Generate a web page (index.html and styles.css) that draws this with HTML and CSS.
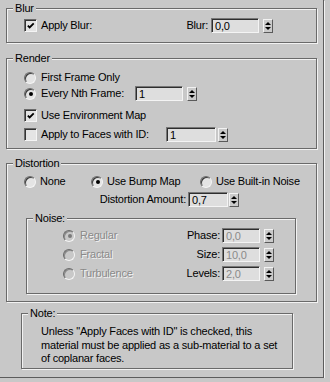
FILE: index.html
```html
<!DOCTYPE html>
<html lang="en">
<head>
    <meta charset="UTF-8">
    <title>Blur / Render / Distortion</title>
    <link rel="stylesheet" href="styles.css">
</head>
<body>
    <div class="panel">
        <div class="group blur">
            <div class="group-title">Blur</div>
            <div class="row blur-row">
                <span class="check on"><svg width="11" height="11" viewBox="0 0 11 11"><path d="M2 4.5l2 2 4.5-4.5" stroke="#000" stroke-width="2" fill="none"/></svg></span>
                <span class="lbl">Apply Blur:</span>
                <div class="field push">
                    <span>Blur:</span>
                    <span class="edit w48">0,0</span>
                    <span class="spin"></span>
                </div>
            </div>
        </div>

        <div class="group render">
            <div class="group-title">Render</div>
            <div class="row opt r1">
                <span class="radio"></span><span class="lbl">First Frame Only</span>
            </div>
            <div class="row opt r2">
                <span class="radio on"></span><span class="lbl nth-lbl">Every Nth Frame:</span>
                <span class="edit w48">1</span>
                <span class="spin"></span>
            </div>
            <div class="row opt r3">
                <span class="check on"><svg width="11" height="11" viewBox="0 0 11 11"><path d="M2 4.5l2 2 4.5-4.5" stroke="#000" stroke-width="2" fill="none"/></svg></span>
                <span class="lbl">Use Environment Map</span>
            </div>
            <div class="row opt r4">
                <span class="check"></span><span class="lbl id-lbl">Apply to Faces with ID:</span>
                <span class="edit w50">1</span>
                <span class="spin id-spin"></span>
            </div>
        </div>

        <div class="group distortion">
            <div class="group-title">Distortion</div>
            <div class="row modes">
                <span class="mode mode-none"><span class="radio"></span>None</span>
                <span class="mode mode-bump"><span class="radio on"></span>Use Bump Map</span>
                <span class="mode"><span class="radio"></span>Use Built-in Noise</span>
            </div>
            <div class="row amount">
                <span>Distortion Amount:</span>
                <span class="edit w40">0,7</span>
                <span class="spin"></span>
            </div>

            <div class="group noise">
                <div class="group-title">Noise:</div>
                <div class="row noise-row first">
                    <span class="radio off on"></span><span class="lbl dim">Regular</span>
                    <div class="field push">
                        <span>Phase:</span>
                        <span class="edit w38 dim-val">0,0</span>
                        <span class="spin"></span>
                    </div>
                </div>
                <div class="row noise-row">
                    <span class="radio off"></span><span class="lbl dim">Fractal</span>
                    <div class="field push">
                        <span>Size:</span>
                        <span class="edit w38 dim-val">10,0</span>
                        <span class="spin"></span>
                    </div>
                </div>
                <div class="row noise-row">
                    <span class="radio off"></span><span class="lbl dim">Turbulence</span>
                    <div class="field push">
                        <span>Levels:</span>
                        <span class="edit w38 dim-val">2,0</span>
                        <span class="spin"></span>
                    </div>
                </div>
            </div>
        </div>

        <div class="group note">
            <div class="group-title">Note:</div>
            <p class="note-text">Unless "Apply Faces with ID" is checked, this<br>material must be applied as a sub-material to a set<br>of coplanar faces.</p>
        </div>
    </div>
</body>
</html>
```

FILE: styles.css
```css
body {
    margin: 0;
    background: #c8c8c8;
    font-family: "Liberation Sans", Arial, sans-serif;
    font-size: 11px;
    line-height: 13px;
    letter-spacing: -0.2px;
    color: #000;
}
.panel {
    width: 311px;
    height: 361px;
    padding: 8px 6px;
    border-right: 1px solid #5c5c5c;
    border-bottom: 1px solid #5c5c5c;
    box-shadow: 1px 1px 0 #f2f2f2;
}
.group {
    border: 1px solid #6a6a6a;
    box-shadow: inset 1px 1px 0 #f2f2f2, 1px 1px 0 #f2f2f2;
}
.group-title {
    width: fit-content;
    margin: -7px 0 0 6px;
    padding: 0 2px;
    background: #c8c8c8;
}
.row {
    display: flex;
    align-items: center;
    height: 15px;
}
.push {
    margin-left: auto;
}
.field {
    display: flex;
    align-items: center;
}

/* widgets */
.check {
    box-sizing: border-box;
    width: 13px;
    height: 13px;
    flex: none;
    border: 1px solid;
    border-color: #6a6a6a #f4f4f4 #f4f4f4 #6a6a6a;
    box-shadow: inset 1px 1px 0 #333;
    background: #e4e4e4;
    display: flex;
    align-items: center;
    justify-content: center;
}
.check svg {
    margin: 1px 0 0 1px;
}
.check:not(.on) svg {
    display: none;
}
.radio {
    box-sizing: border-box;
    width: 12px;
    height: 12px;
    flex: none;
    border-radius: 50%;
    border: 1px solid;
    border-color: #6a6a6a #f4f4f4 #f4f4f4 #6a6a6a;
    box-shadow: inset 1px 1px 0 #3a3a3a;
    background: #e4e4e4;
    display: flex;
    align-items: center;
    justify-content: center;
}
.radio.on::after {
    content: "";
    width: 4px;
    height: 4px;
    margin: 1px 0 0 1px;
    border-radius: 50%;
    background: #000;
}
.radio.off {
    background: #c8c8c8;
    box-shadow: inset 1px 1px 0 #8a8a8a;
}
.radio.off.on::after {
    background: #7a7a7a;
}
.edit {
    box-sizing: border-box;
    height: 15px;
    padding: 1px 0 0 3px;
    border: 1px solid;
    border-color: #777 #f4f4f4 #f4f4f4 #777;
    box-shadow: inset 1px 1px 0 #2e2e2e;
    background: #dedede;
    line-height: 12px;
    margin-left: 3px;
}
.w38 { width: 38px; }
.w40 { width: 40px; }
.w48 { width: 48px; }
.w50 { width: 50px; }
.spin {
    box-sizing: border-box;
    width: 10px;
    height: 14px;
    margin-left: 4px;
    padding: 2px 0;
    border: 1px solid;
    border-color: #f2f2f2 #5a5a5a #5a5a5a #f2f2f2;
    background: #cacaca;
    display: flex;
    flex-direction: column;
    align-items: center;
    justify-content: space-between;
}
.spin::before,
.spin::after {
    content: "";
    border-left: 3px solid transparent;
    border-right: 3px solid transparent;
}
.spin::before {
    border-bottom: 3px solid #000;
}
.spin::after {
    border-top: 3px solid #000;
}
.dim {
    color: #8a8a8a;
    text-shadow: 1px 1px 0 #f2f2f2;
}
.dim-val {
    color: #8a8a8a;
}

/* blur */
.blur {
    padding-bottom: 9px;
}
.blur-row {
    margin-top: 3px;
    padding: 0 43px 0 17px;
}
.blur-row .lbl {
    margin-left: 4px;
}

/* render */
.render {
    margin-top: 15px;
    padding-bottom: 6px;
}
.opt {
    padding-left: 17px;
}
.opt .lbl {
    margin-left: 5px;
}
.opt .check + .lbl {
    margin-left: 4px;
}
.r1 { margin-top: 5px; }
.r2 { margin-top: 1px; }
.r3 { margin-top: 7px; }
.r4 { margin-top: 4px; }
.nth-lbl {
    width: 91px;
}
.id-lbl {
    width: 122px;
}
.id-spin {
    margin-left: 2px;
}

/* distortion */
.distortion {
    margin-top: 14px;
    padding-bottom: 7px;
}
.modes {
    margin-top: 4px;
    padding-left: 17px;
}
.mode {
    display: flex;
    align-items: center;
    gap: 4px;
}
.mode-none { width: 67px; }
.mode-bump { width: 109px; }
.amount {
    margin-top: 3px;
    justify-content: flex-end;
    padding-right: 77px;
}
.amount .edit {
    margin-left: 2px;
}
.amount .spin {
    margin-left: 1px;
}
.noise {
    margin: 11px 20px 0 19px;
    padding-bottom: 12px;
}
.noise-row {
    margin-top: 4px;
    padding: 0 21px 0 36px;
}
.noise-row.first {
    margin-top: 3px;
}
.noise-row .lbl {
    margin-left: 5px;
}
.noise-row .edit {
    margin-left: 2px;
}

/* note */
.note {
    margin: 11px 24px 0 15px;
    padding-bottom: 2.5px;
}
.note-text {
    margin: 5px 0 0 19px;
    line-height: 13.5px;
}
```
